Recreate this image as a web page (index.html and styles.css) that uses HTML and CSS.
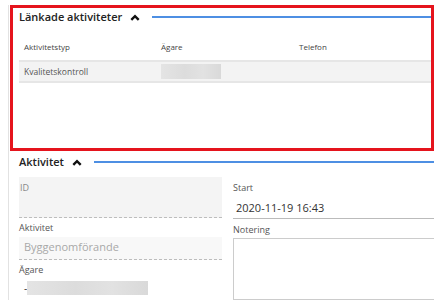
FILE: index.html
```html
<!DOCTYPE html>
<html lang="sv">
<head>
    <meta charset="UTF-8">
    <meta name="viewport" content="width=device-width, initial-scale=1.0">
    <title>Aktivitet</title>
    <link rel="stylesheet" href="styles.css">
</head>
<body>
    <div class="page">
        <!-- Länkade aktiviteter -->
        <div class="linked">
            <div class="section-head">
                <span class="section-title">Länkade aktiviteter</span>
                <svg class="chevron" width="10" height="7" viewBox="0 0 10 7">
                    <polyline points="1.3,5.8 5,2.1 8.7,5.8" fill="none" stroke="#111" stroke-width="2.4"/>
                </svg>
                <span class="section-line"></span>
            </div>
            <table class="linked-table">
                <thead>
                    <tr>
                        <th class="col-type">Aktivitetstyp</th>
                        <th class="col-owner">Ägare</th>
                        <th>Telefon</th>
                    </tr>
                </thead>
                <tbody>
                    <tr>
                        <td>Kvalitetskontroll</td>
                        <td><div class="blurred small"></div></td>
                        <td></td>
                    </tr>
                </tbody>
            </table>
        </div>

        <!-- Aktivitet -->
        <div class="activity">
            <div class="section-head">
                <span class="section-title">Aktivitet</span>
                <svg class="chevron" width="10" height="7" viewBox="0 0 10 7">
                    <polyline points="1.3,5.8 5,2.1 8.7,5.8" fill="none" stroke="#111" stroke-width="2.4"/>
                </svg>
                <span class="section-line"></span>
            </div>
            <div class="fields">
                <div class="col-left">
                    <div class="id-field">
                        <div class="id-label">ID</div>
                    </div>
                    <div class="label">Aktivitet</div>
                    <div class="readonly">Byggenomförande</div>
                    <div class="label">Ägare</div>
                    <div class="owner-row">
                        <span class="dash">-</span>
                        <div class="blurred wide"></div>
                    </div>
                </div>
                <div class="col-right">
                    <div class="label first">Start</div>
                    <div class="value">2020-11-19 16:43</div>
                    <div class="label">Notering</div>
                    <div class="note"></div>
                </div>
            </div>
        </div>
    </div>
</body>
</html>
```

FILE: styles.css
```css
html, body {
    margin: 0;
    padding: 0;
    background-color: white;
    overflow: hidden;
    height: 300px;
}
body {
    font-family: "Open Sans", Arial, sans-serif;
    color: #333;
}
.page {
    margin-left: 8px;
    border-left: 1px solid #e2e2e2;
    padding-left: 1px;
    height: 300px;
}
.linked {
    margin-top: 5px;
    height: 146px;
    box-sizing: border-box;
    border: 3px solid #e5141d;
    padding-left: 6px;
}
.section-head {
    display: flex;
    align-items: center;
    height: 18px;
}
.section-title {
    font-size: 11px;
    font-weight: 600;
    color: #222;
    line-height: 18px;
}
.chevron {
    margin-left: 8px;
    margin-top: 1px;
}
.section-line {
    flex: 1;
    height: 2px;
    margin-left: 12px;
    margin-top: -1px;
    background-color: #4d8fe3;
}
.linked-table {
    width: 100%;
    border-collapse: collapse;
    font-size: 8px;
    color: #555;
}
.linked-table th {
    text-align: left;
    font-weight: normal;
    line-height: 10px;
    padding: 16px 5px 8px 5px;
    color: #444;
}
.col-type {
    width: 127px;
}
.col-owner {
    width: 128px;
}
.linked-table td {
    background-color: #f3f3f3;
    border-top: 2px solid #e6e6e6;
    border-bottom: 2px solid #e6e6e6;
    padding: 0 5px;
    height: 19px;
    font-size: 8.5px;
    line-height: 10px;
}
.blurred {
    background: linear-gradient(90deg, #e4e4e4, #dcdcdc 40%, #e2e2e2 70%, #d9d9d9);
    filter: blur(0.6px);
}
.blurred.small {
    width: 60px;
    height: 15px;
}
.blurred.wide {
    width: 121px;
    height: 14px;
}
.activity {
    margin-top: 2px;
    padding-left: 9px;
}
.fields {
    display: flex;
    gap: 11px;
    margin-top: 6px;
}
.col-left {
    width: 203px;
    flex-shrink: 0;
}
.col-right {
    flex: 1;
    min-width: 0;
}
.id-field {
    height: 40px;
    background-color: #f4f4f4;
    border-bottom: 1px dashed #bdbdbd;
}
.id-label {
    font-size: 9px;
    line-height: 12px;
    padding: 5px 0 0 1px;
    color: #888;
}
.label {
    font-size: 9px;
    line-height: 12px;
    margin-top: 5px;
    color: #555;
}
.col-left .label {
    margin-top: 4px;
}
.col-right .label.first {
    margin-top: 5px;
}
.readonly {
    margin-top: 3px;
    height: 20px;
    padding: 2px 0 0 5px;
    background-color: #f8f8f8;
    border-bottom: 1px dashed #bdbdbd;
    font-size: 11px;
    line-height: 16px;
    color: #a8a8a8;
}
.owner-row {
    display: flex;
    align-items: center;
    margin-top: 5px;
    padding-left: 5px;
}
.dash {
    font-size: 10px;
    line-height: 14px;
    color: #333;
    width: 3px;
}
.value {
    margin-top: 4px;
    padding: 0 0 1px 3px;
    border-bottom: 1px solid #bbb;
    font-size: 11px;
    line-height: 19px;
    color: #333;
}
.note {
    margin-top: 2px;
    height: 60px;
    border: 1px solid #ccc;
    border-right: none;
}
```
